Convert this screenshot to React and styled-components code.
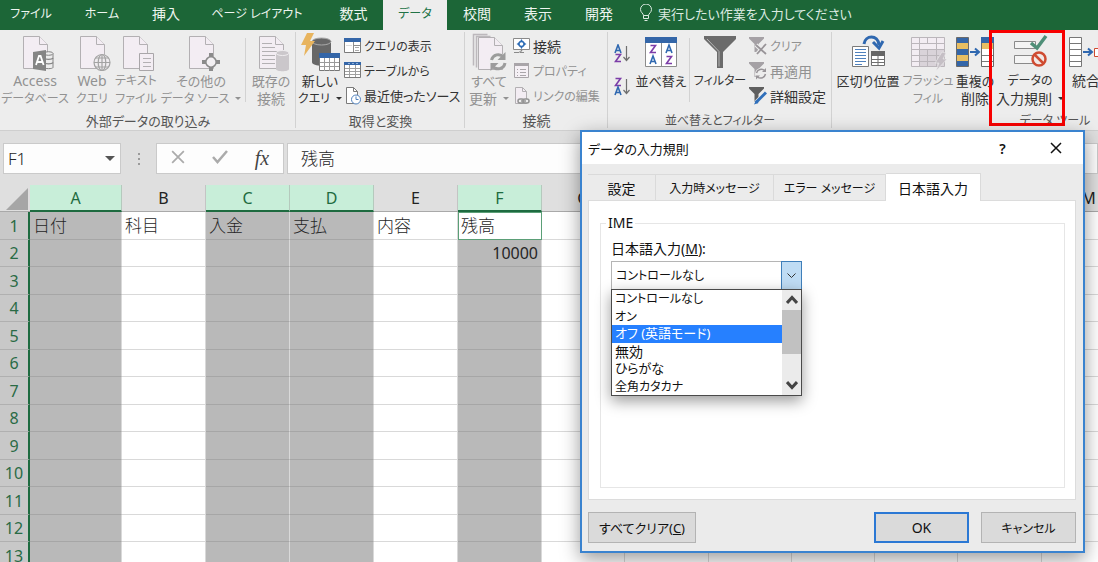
import styled, { createGlobalStyle, css } from "styled-components"

const GlobalStyle = createGlobalStyle`
  * {
    box-sizing: border-box;
  }

  body {
    margin: 0;
    overflow: hidden;
    font-family: "Noto Sans", "Noto Sans CJK JP", sans-serif;
    font-size: 14px;
    color: #262626;
    background: #fff;
  }

  button, input, select {
    font: inherit;
    color: inherit;
  }
`

const tabsData = [
  { name: "ファイル", width: 62 },
  { name: "ホーム", width: 80 },
  { name: "挿入", width: 48 },
  { name: "ページ レイアウト", width: 134 },
  { name: "数式", width: 59 },
  { name: "データ", width: 64, active: true },
  { name: "校閲", width: 60 },
  { name: "表示", width: 62 },
  { name: "開発", width: 60 },
]

// columns without a title lie behind the dialog
const columns = [
  { name: "A", title: "A", width: 92, selected: true },
  { name: "B", title: "B", width: 84 },
  { name: "C", title: "C", width: 84, selected: true },
  { name: "D", title: "D", width: 84, selected: true },
  { name: "E", title: "E", width: 84 },
  { name: "F", title: "F", width: 84, selected: true },
  { name: "G", title: "G", width: 83 },
  { name: "H", width: 84 },
  { name: "I", width: 83 },
  { name: "J", width: 83 },
  { name: "K", width: 83 },
  { name: "L", width: 84 },
  { name: "M", title: "M", width: 94 },
]

const cells = {
  A1: "日付",
  B1: "科目",
  C1: "入金",
  D1: "支払",
  E1: "内容",
  F1: "残高",
  F2: "10000",
}

const rows = [1, 2, 3, 4, 5, 6, 7, 8, 9, 10, 11, 12, 13]

const dialogTabs = [
  { name: "設定", width: 68 },
  { name: "入力時メッセージ", width: 118 },
  { name: "エラー メッセージ", width: 112 },
  { name: "日本語入力", width: 95, active: true },
]

const imeOptions = ["コントロールなし", "オン", "オフ (英語モード)", "無効", "ひらがな", "全角カタカナ"]

// katakana labels are set smaller than kanji ones
function textSize(text) {
  const katakana = (text.match(/[ァ-ヶー]/g) || []).length
  const hiragana = (text.match(/[ぁ-ん]/g) || []).length
  if (katakana + hiragana === 0) return 14
  if (text.includes("(")) return 13
  return katakana * 2 >= text.length ? 12 : 13
}

/* ---------- icons ---------- */

function Page({ x = 0, y = 0, fill = "#f3edf3", stroke = "#b3b0b3" }) {
  return (
    <g transform={`translate(${x} ${y})`} fill={fill} stroke={stroke}>
      <path d="M.5.5h16l8 8v24H.5z" />
      <path d="M16.5.5v8h8" />
    </g>
  )
}

function AccessIcon() {
  return (
    <svg width="38" height="38">
      <Page x={7} y={2} />
      <path d="M29 19.500v14c0 1.500 9 1.500 9 0v-14" fill="#ededed" stroke="#858585" transform="translate(-1 0)" />
      <ellipse cx="32.500" cy="19.500" rx="4.500" ry="1.800" fill="#ededed" stroke="#858585" />
      <path d="M28 24c1 1.800 8 1.800 9 0M28 28.500c1 1.800 8 1.800 9 0" fill="none" stroke="#858585" strokeWidth="1.400" />
      <path d="M17 18l13-2v21l-13-2z" fill="#858585" />
      <path d="M20 31l3-9h1.600l3 9M21.200 28h5" fill="none" stroke="#fff" strokeWidth="1.800" />
    </svg>
  )
}

function WebIcon() {
  return (
    <svg width="38" height="38">
      <Page x={7} y={2} />
      <g fill="#efecef" stroke="#a3a3a3" strokeWidth="1.200">
        <circle cx="29" cy="28.500" r="8" />
        <ellipse cx="29" cy="28.500" rx="3.800" ry="8" />
        <path d="M29 20.500v16M21 28.500h16M22.500 24h13M22.500 33h13" />
      </g>
    </svg>
  )
}

function TextFileIcon() {
  return (
    <svg width="38" height="38">
      <Page x={6} y={2} />
      <path d="M22.500 19.500h14v17h-14z" fill="#f3edf3" stroke="#a9a6a9" />
      <path d="M26 24.500h8M26 28.500h8M26 32.500h8" stroke="#b3b0b3" />
    </svg>
  )
}

function OtherSourceIcon() {
  return (
    <svg width="38" height="38">
      <Page x={7} y={2} />
      <circle cx="29" cy="28" r="5.200" fill="#f3f0f3" stroke="#8b8b8b" strokeWidth="1.600" />
      <path d="M27 19h4v4h-4zM27 33h4v4h-4zM20 26h4v4h-4zM34 26h4v4h-4z" fill="#8b8b8b" />
    </svg>
  )
}

function ExistingIcon() {
  return (
    <svg width="38" height="38">
      <Page x={7} y={2} />
      <path d="M10 9.500h10M10 13.500h13M10 17.500h18M10 21.500h13M10 25.500h13M10 29.500h13" stroke="#b3b0b3" />
      <path d="M24 19v16c0 3 13 3 13 0V19z" fill="#cbc7cb" />
      <ellipse cx="30.500" cy="19" rx="6.500" ry="2.500" fill="#cbc7cb" stroke="#efecef" />
    </svg>
  )
}

function NewQueryIcon() {
  return (
    <svg width="40" height="38">
      <path d="M12 7v21c0 5 19 5 19 0V7z" fill="#676767" />
      <ellipse cx="21.500" cy="7.500" rx="9.500" ry="3.500" fill="#676767" stroke="#aaa" />
      <path d="M7-1h7l-4 8h5L4 22l2-11H1z" fill="#e8b45e" />
      <path d="M19.500 19.500h20v17h-20z" fill="#fff" stroke="#777" />
      <path d="M19 19h21v5H19z" fill="#3466a8" />
      <path d="M20 28.500h19M20 32.500h19M24.500 24v13M29.500 24v13M34.500 24v13" stroke="#9a9a9a" />
    </svg>
  )
}

function RefreshAllIcon() {
  return (
    <svg width="34" height="38">
      <path d="M1.500 31.500V.5h14M4.500 33.500v-31h14" fill="none" stroke="#bcb8bc" strokeWidth="1.500" />
      <Page x={6} y={3} />
      <circle cx="26" cy="27.500" r="8.500" fill="#eee" />
      <path d="M19.500 26a7 7 0 0 1 12-3M33 29a7 7 0 0 1-12.500 3" fill="none" stroke="#9c9c9c" strokeWidth="3" />
      <path d="M33.500 18v8h-8zM18.500 37v-8h8z" fill="#9c9c9c" />
    </svg>
  )
}

function QueryListIcon() {
  return (
    <svg width="17" height="17">
      <path d="M.5 1.500h16v14H.5z" fill="#fff" stroke="#7b7b7b" />
      <path d="M0 1h17v4H0z" fill="#3466a8" />
      <path d="M9.500 5v10M10 8.500h6" stroke="#8e8e8e" />
      <path d="M11 10.500h4M11 13.500h4" stroke="#aaa" />
      <path d="M2 8.500h6" stroke="#ddd" />
    </svg>
  )
}

function TableIcon() {
  return (
    <svg width="17" height="17">
      <path d="M.5 1.500h16v14H.5z" fill="#fff" stroke="#7b7b7b" />
      <path d="M0 0h17v3H0z" fill="#3466a8" />
      <path d="M4 1.500h2M8 1.500h2M12 1.500h2" stroke="#8fb0db" />
      <path d="M1 6.500h15M1 9.500h15M1 12.500h15M5.500 3v12M11.500 3v12" stroke="#a0a0a0" />
    </svg>
  )
}

function RecentIcon() {
  return (
    <svg width="17" height="19">
      <path d="M2.500 1.500h7l4 4v12h-11z" fill="#fff" stroke="#7b7b7b" />
      <path d="M9.500 1.500v4h4" fill="none" stroke="#7b7b7b" />
      <circle cx="12" cy="13.500" r="4.500" fill="#fff" stroke="#4f81bd" />
      <path d="M12 10.500v3h2.500" fill="none" stroke="#4f81bd" />
    </svg>
  )
}

function ConnectionIcon() {
  return (
    <svg width="17" height="17">
      <path d="M.5 1.500h16v11H.5z" fill="#fff" stroke="#8a8a8a" />
      <path d="M1 15.500h5l2-2h1l-2 2h4" fill="none" stroke="#8a8a8a" />
      <path d="M8.500 2l1.500 2.500h-3zM8.500 12L7 9.500h3zM3.500 7L6 5.500v3zM13.500 7L11 8.500v-3z" fill="#2d6cb5" />
      <circle cx="8.500" cy="7" r="2.500" fill="#fff" stroke="#2d6cb5" strokeWidth="1.400" />
    </svg>
  )
}

function PropertyIcon() {
  return (
    <svg width="17" height="17">
      <path d="M1.500 1.500h14v14h-14z" fill="#f5f0f5" stroke="#a9a5a9" />
      <path d="M1 1h15v3H1z" fill="#a9a5a9" />
      <path d="M4 7.500h1M7 7.500h6M4 10.500h1M7 10.500h6M4 13.500h1M7 13.500h6" stroke="#a9a5a9" />
    </svg>
  )
}

function LinkEditIcon() {
  return (
    <svg width="17" height="19">
      <path d="M2.500 1.500h7l4 4v12h-11z" fill="#f3edf3" stroke="#b3b0b3" />
      <path d="M9.500 1.500v4h4" fill="none" stroke="#b3b0b3" />
      <g fill="#eee" stroke="#939393" strokeWidth="1.500">
        <rect x="5" y="13" width="6" height="4" rx="2" />
        <rect x="10" y="13" width="6" height="4" rx="2" />
      </g>
      <path d="M8 15h5" stroke="#939393" strokeWidth="1.500" />
    </svg>
  )
}

const letterPaths = {
  A: "M0 8L3 0l3 8M1 5.500h4",
  Z: "M.5.500h5L.5 7.500h5.500",
}

// small "A" and "Z" strokes used by the sort icons
function Letter({ char, x, y }) {
  return (
    <path
      d={letterPaths[char]}
      transform={`translate(${x} ${y})`}
      fill="none"
      stroke={char === "A" ? "#2f68b0" : "#7c3da8"}
      strokeWidth="1.600"
    />
  )
}

function SortIcon({ first, second }) {
  return (
    <svg width="16" height="20">
      <Letter char={first} x={1} y={1} />
      <Letter char={second} x={1} y={10} />
      <path d="M12.500 2v14M9.500 13l3 3.500 3-3.500" fill="none" stroke="#6f6f6f" strokeWidth="1.200" />
    </svg>
  )
}

function SortDialogIcon() {
  return (
    <svg width="34" height="38">
      <path d="M1.500 3.500h31v29h-31zM17.500 8v24" fill="#fff" stroke="#8c8c8c" />
      <path d="M1 3h32v6H1z" fill="#3466a8" />
      <Letter char="Z" x={6} y={11} />
      <Letter char="A" x={6} y={22} />
      <Letter char="A" x={22} y={11} />
      <Letter char="Z" x={22} y={22} />
    </svg>
  )
}

function FilterIcon() {
  return (
    <svg width="34" height="38">
      <path d="M1 2h32v3L20 18v16h-6V18L1 5z" fill="#6b6b6b" />
      <path d="M4 5l12 12.500v15" fill="none" stroke="#b5b5b5" />
    </svg>
  )
}

function SmallFunnel({ color }) {
  return <path d="M0 1h15v1.500L9.500 8v8h-4V8L0 2.500z" fill={color} />
}

function ClearIcon() {
  return (
    <svg width="18" height="19">
      <SmallFunnel color="#a5a1a5" />
      <path d="M7 9l10 9M17 8L8 18" stroke="#ededed" strokeWidth="4" />
      <path d="M7 9l10 9M17 8L8 18" stroke="#989498" strokeWidth="1.800" />
    </svg>
  )
}

function ReapplyIcon() {
  return (
    <svg width="18" height="19">
      <SmallFunnel color="#a5a1a5" />
      <circle cx="12" cy="13" r="6" fill="#ededed" />
      <path d="M7.500 12a5 5 0 0 1 8-2.500M16.500 13a5 5 0 0 1-8 3" fill="none" stroke="#989498" strokeWidth="1.500" />
      <path d="M17 7v4h-4zM7 18.500v-4h4z" fill="#989498" />
    </svg>
  )
}

function AdvancedIcon() {
  return (
    <svg width="18" height="19">
      <SmallFunnel color="#5f5f5f" />
      <path d="M17 7L7 17" stroke="#ededed" strokeWidth="5" />
      <path d="M17 6.500L7 16.500" stroke="#2f6fba" strokeWidth="3" />
      <path d="M7 14l-2 4.500L9.500 17z" fill="#2f6fba" />
    </svg>
  )
}

function SplitIcon() {
  return (
    <svg width="36" height="38">
      <path d="M2.500 12.500h16v20h-16z" fill="#fff" stroke="#7a7a7a" />
      <path d="M5 15.500h11M5 18.500h11M5 21.500h11M5 24.500h11M5 27.500h11M5 30.500h7" stroke="#4f81bd" />
      <path d="M21.500 18.500h13v13h-13zM28 22v10M22 25.500h13M22 28.500h13" fill="#fff" stroke="#6f6f6f" />
      <path d="M21 17h14v5H21z" fill="#666" />
      <path d="M14 10c1-9 14-10 15 1" fill="none" stroke="#2f68b0" strokeWidth="3" />
      <path d="M23 8l6 6 4-7" fill="none" stroke="#2f68b0" strokeWidth="3" />
    </svg>
  )
}

function FlashFillIcon() {
  return (
    <svg width="38" height="38">
      <path d="M2.500 3.500h33v29h-33z" fill="#f3edf3" stroke="#bbb6bb" />
      <path d="M10 15h25v17H10z" fill="#d9d3d9" />
      <path d="M3 9.500h32M3 15.500h32M3 21.500h32M3 27.500h32M10.500 4v29M18.500 4v29M27.500 4v29" stroke="#bbb6bb" />
      <path d="M11 10h16v5H11z" fill="#f3edf3" />
      <path d="M33 18l4 1-3 6h4L27 37l3-8h-4z" fill="#c5bfc5" stroke="#eee" strokeWidth=".6" />
    </svg>
  )
}

function DuplicateIcon() {
  return (
    <svg width="38" height="38">
      <path d="M.5 3.500h12v29H.5z" fill="#3466a8" stroke="#6a6a6a" />
      <path d="M1 9h11v6H1zM1 21h11v6H1z" fill="#e8be62" />
      <path d="M25.500 3.500h12v29h-12z" fill="#fff" stroke="#6a6a6a" />
      <path d="M25 3h13v6H25z" fill="#3466a8" />
      <path d="M26 9h11v6H26z" fill="#e8be62" />
      <path d="M26 21.500h11M26 27.500h11" stroke="#7a7a7a" />
      <path d="M14 18h8M19 14.500l4 3.500-4 3.500" fill="none" stroke="#2f68b0" strokeWidth="2" />
    </svg>
  )
}

function ValidationIcon() {
  return (
    <svg width="38" height="38">
      <path d="M3.500 7.500h21v7h-21zM3.500 21.500h21v8h-21z" fill="#f4f4f4" stroke="#8a8a8a" />
      <path d="M20 9l6 5L35 2" fill="none" stroke="#4f8f78" strokeWidth="3.500" />
      <circle cx="28" cy="25" r="6.500" fill="#f1e8e5" stroke="#cf4b31" strokeWidth="2.500" />
      <path d="M23.500 20.500l9 9" stroke="#cf4b31" strokeWidth="2.500" />
    </svg>
  )
}

function MergeIcon() {
  return (
    <svg width="38" height="38">
      <path d="M2.500 3.500h12v29h-12z" fill="#fff" stroke="#777" />
      <path d="M3 9.500h11M3 15.500h11M3 21.500h11M3 27.500h11" stroke="#777" />
      <path d="M16 18h8M21 14.500l4 3.500-4 3.500" fill="none" stroke="#2f68b0" strokeWidth="2" />
      <path d="M27.500 14.500h10v8h-10z" fill="#fff" stroke="#cf4b31" />
    </svg>
  )
}

function BulbIcon() {
  return (
    <svg width="12" height="18" fill="none" stroke="#dcebe2">
      <path d="M3.500 11.500c0-2-3-3-3-6a5 5 0 0 1 11 0c0 3-3 4-3 6zM3.500 11.500v3h5v-3M4.500 16.500h3" />
    </svg>
  )
}

function CrossIcon({ color, size }) {
  return (
    <svg width={size} height={size} viewBox="0 0 12 12">
      <path d="M1 1l10 10M11 1L1 11" stroke={color} strokeWidth="1.500" />
    </svg>
  )
}

/* ---------- ribbon ---------- */

function BigButton({ icon, lines, width, off, arrow, children }) {
  return (
    <BigBtn type="button" $width={width} $off={off}>
      {icon}
      {lines.map((line, i) => (
        <BigLine key={line} $size={textSize(line)}>
          {line}
          {arrow && i === lines.length - 1 && <Arrow />}
        </BigLine>
      ))}
      {children}
    </BigBtn>
  )
}

function SmallButton({ icon, text, off }) {
  return (
    <SmallBtn type="button" $off={off} $size={textSize(text)}>
      {icon}
      <span>{text}</span>
    </SmallBtn>
  )
}

function Group({ name, width, children }) {
  return (
    <GroupBox $width={width}>
      <GroupTools>{children}</GroupTools>
      <GroupName $size={textSize(name)}>{name}</GroupName>
    </GroupBox>
  )
}

function Ribbon() {
  return (
    <RibbonBar>
      <Group name="外部データの取り込み" width={296}>
        <BigButton icon={<AccessIcon />} lines={["Access", "データベース"]} width={70} off />
        <BigButton icon={<WebIcon />} lines={["Web", "クエリ"]} width={44} off />
        <BigButton icon={<TextFileIcon />} lines={["テキスト", "ファイル"]} width={44} off />
        <BigButton icon={<OtherSourceIcon />} lines={["その他の", "データ ソース"]} width={86} off arrow />
        <Divider />
        <BigButton icon={<ExistingIcon />} lines={["既存の", "接続"]} width={48} off />
      </Group>
      <Group name="取得と変換" width={169}>
        <BigButton icon={<NewQueryIcon />} lines={["新しい", "クエリ"]} width={48} arrow />
        <SmallList>
          <SmallButton icon={<QueryListIcon />} text="クエリの表示" />
          <SmallButton icon={<TableIcon />} text="テーブルから" />
          <SmallButton icon={<RecentIcon />} text="最近使ったソース" />
        </SmallList>
      </Group>
      <Group name="接続" width={143}>
        <BigButton icon={<RefreshAllIcon />} lines={["すべて", "更新"]} width={48} off arrow />
        <SmallList>
          <SmallButton icon={<ConnectionIcon />} text="接続" />
          <SmallButton icon={<PropertyIcon />} text="プロパティ" off />
          <SmallButton icon={<LinkEditIcon />} text="リンクの編集" off />
        </SmallList>
      </Group>
      <Group name="並べ替えとフィルター" width={224}>
        <SortList>
          <SortBtn type="button" aria-label="昇順"><SortIcon first="A" second="Z" /></SortBtn>
          <SortBtn type="button" aria-label="降順"><SortIcon first="Z" second="A" /></SortBtn>
        </SortList>
        <BigButton icon={<SortDialogIcon />} lines={["並べ替え"]} width={54} />
        <Divider />
        <BigButton icon={<FilterIcon />} lines={["フィルター"]} width={58} />
        <SmallList>
          <SmallButton icon={<ClearIcon />} text="クリア" off />
          <SmallButton icon={<ReapplyIcon />} text="再適用" off />
          <SmallButton icon={<AdvancedIcon />} text="詳細設定" />
        </SmallList>
      </Group>
      <Group name="データ ツール" width={446}>
        <BigButton icon={<SplitIcon />} lines={["区切り位置"]} width={72} />
        <BigButton icon={<FlashFillIcon />} lines={["フラッシュ", "フィル"]} width={48} off />
        <BigButton icon={<DuplicateIcon />} lines={["重複の", "削除"]} width={46} />
        <BigButton icon={<ValidationIcon />} lines={["データの", "入力規則"]} width={64} arrow>
          <Marker />
        </BigButton>
        <BigButton icon={<MergeIcon />} lines={["統合"]} width={48} />
      </Group>
    </RibbonBar>
  )
}

/* ---------- sheet ---------- */

function FormulaBar() {
  return (
    <FormulaRow>
      <NameBox>
        <input aria-label="名前ボックス" defaultValue="F1" />
        <Arrow $big />
      </NameBox>
      <Dots><i /><i /><i /></Dots>
      <FxBox>
        <button type="button" aria-label="キャンセル"><CrossIcon color="#ababab" size={14} /></button>
        <button type="button" aria-label="入力">
          <svg width="16" height="14"><path d="M1 7l4.500 5L15 1" fill="none" stroke="#ababab" strokeWidth="2.500" /></svg>
        </button>
        <Fx type="button">fx</Fx>
      </FxBox>
      <FormulaInput aria-label="数式バー" defaultValue="残高" />
    </FormulaRow>
  )
}

function Sheet() {
  return (
    <Grid>
      <colgroup>
        <Col $width={30} />
        {columns.map((col) => <Col key={col.name} $width={col.width} />)}
      </colgroup>
      <thead>
        <tr>
          <Corner>
            <svg width="22" height="22"><path d="M22 0v22H0z" fill="#a6a6a6" /></svg>
          </Corner>
          {columns.map((col) => (
            <ColHead key={col.name} $selected={col.selected}>{col.title}</ColHead>
          ))}
        </tr>
      </thead>
      <tbody>
        {rows.map((row) => (
          <Row key={row}>
            <RowHead>{row}</RowHead>
            {columns.map((col) => {
              const id = col.name + row
              return (
                <Cell key={id} $selected={col.selected} $current={id === "F1"} $number={row > 1}>
                  {cells[id]}
                </Cell>
              )
            })}
          </Row>
        ))}
      </tbody>
    </Grid>
  )
}

/* ---------- dialog ---------- */

function ValidationDialog() {
  return (
    <Dialog role="dialog" aria-labelledby="dialog-title">
      <TitleBar>
        <DialogTitle id="dialog-title">データの入力規則</DialogTitle>
        <TitleButton type="button">?</TitleButton>
        <TitleButton type="button" aria-label="閉じる"><CrossIcon color="#111" size={12} /></TitleButton>
      </TitleBar>
      <DialogBody>
        <DialogTabs role="tablist">
          {dialogTabs.map((tab) => (
            <DialogTab
              key={tab.name}
              type="button"
              role="tab"
              aria-selected={!!tab.active}
              $active={tab.active}
              $width={tab.width}
              $size={textSize(tab.name)}
            >
              {tab.name}
            </DialogTab>
          ))}
        </DialogTabs>
        <Panel>
          <Fieldset>
            <legend>IME</legend>
            <label htmlFor="ime">日本語入力(<u>M</u>):</label>
            <SelectWrap>
              <Select id="ime" defaultValue={imeOptions[0]}>
                {imeOptions.map((option) => <option key={option}>{option}</option>)}
              </Select>
              <SelectArrow>
                <svg width="9" height="6"><path d="M.5.5l4 4 4-4" fill="none" stroke="#333" /></svg>
              </SelectArrow>
              <Popup>
                <Options role="listbox" aria-label="日本語入力">
                  {imeOptions.map((option, i) => (
                    <Option key={option} role="option" aria-selected={i === 2} $selected={i === 2} $size={textSize(option)}>
                      {option}
                    </Option>
                  ))}
                </Options>
                <Scrollbar>
                  <svg width="12" height="10"><path d="M1 8l5-5.500L11 8" fill="none" stroke="#444" strokeWidth="3" /></svg>
                  <Thumb />
                  <svg width="12" height="10"><path d="M1 2l5 5.500L11 2" fill="none" stroke="#444" strokeWidth="3" /></svg>
                </Scrollbar>
              </Popup>
            </SelectWrap>
          </Fieldset>
        </Panel>
        <DialogFooter>
          <DialogButton type="button" $width={108} $size={13}>すべてクリア(<u>C</u>)</DialogButton>
          <Spacer />
          <DialogButton type="button" $width={95} $size={14} $primary>OK</DialogButton>
          <DialogButton type="button" $width={95} $size={12}>キャンセル</DialogButton>
        </DialogFooter>
      </DialogBody>
    </Dialog>
  )
}

function App() {
  return (
    <Window>
      <GlobalStyle />
      <TabBar>
        {tabsData.map((tab) => (
          <Tab key={tab.name} type="button" $active={tab.active} $width={tab.width} $size={textSize(tab.name)}>
            {tab.name}
          </Tab>
        ))}
        <TellMe type="button">
          <BulbIcon />
          実行したい作業を入力してください
        </TellMe>
      </TabBar>
      <Ribbon />
      <FormulaBar />
      <Sheet />
      <ValidationDialog />
    </Window>
  )
}

export default App

const proportional = css`
  font-feature-settings: "palt";
  white-space: nowrap;
`

const Window = styled.div`
  position: relative;
  height: 100vh;
  overflow: hidden;
  background: #dfdfdf;
`
const TabBar = styled.nav`
  display: flex;
  height: 30px;
  background: #1c6637;
`
const Tab = styled.button`
  ${proportional}
  flex: none;
  width: ${(props) => props.$width}px;
  padding: 0 0 5px;
  border: 0;
  font-size: ${(props) => props.$size}px;
  color: ${(props) => (props.$active ? "#217346" : "#eef5f0")};
  background: ${(props) => (props.$active ? "#ededed" : "transparent")};
`
const TellMe = styled.button`
  ${proportional}
  display: flex;
  align-items: center;
  gap: 6px;
  padding: 0 0 4px;
  margin-left: 11px;
  border: 0;
  color: #dcebe2;
  background: transparent;
  font-size: 13px;
`
const RibbonBar = styled.div`
  ${proportional}
  display: flex;
  height: 101px;
  overflow: hidden;
  background: #ededed;
  border-bottom: 1px solid #cfcfcf;
`
const GroupBox = styled.section`
  flex: none;
  width: ${(props) => props.$width}px;
  background: linear-gradient(#d2d2d2, #d2d2d2) right 2px / 1px 96px no-repeat;
`
const GroupTools = styled.div`
  display: flex;
  height: 82px;
`
const GroupName = styled.div`
  line-height: 18px;
  text-align: center;
  font-size: ${(props) => props.$size}px;
  color: #555;
`
const Divider = styled.div`
  flex: none;
  width: 1px;
  height: 64px;
  margin: 8px 1px 0;
  background: #d2d2d2;
`
const BigBtn = styled.button`
  position: relative;
  display: flex;
  flex: none;
  flex-direction: column;
  align-items: center;
  width: ${(props) => props.$width}px;
  padding: 4px 0 0;
  border: 0;
  background: none;
  white-space: nowrap;
  color: ${(props) => (props.$off ? "#929292" : "#333")};

  svg {
    flex: none;
    margin-bottom: -1px;
    overflow: visible;
  }
`
const BigLine = styled.span`
  display: flex;
  align-items: center;
  height: 18px;
  font-size: ${(props) => props.$size}px;
`
const Arrow = styled.i`
  width: 0;
  margin-left: 6px;
  border: solid transparent;
  border-width: ${(props) => (props.$big ? "5px 5px 0" : "3px 3px 0")};
  border-top-color: ${(props) => (props.$big ? "#555" : "currentColor")};
`
const Marker = styled.span`
  position: absolute;
  top: 0;
  left: -9px;
  width: 76px;
  height: 96px;
  border: 3px solid #f80000;
`
const SmallList = styled.div`
  display: flex;
  flex-direction: column;
  padding-top: 3px;
`
const SmallBtn = styled.button`
  display: flex;
  align-items: center;
  gap: 3px;
  height: 25px;
  padding: 0;
  border: 0;
  background: none;
  font-size: ${(props) => props.$size}px;
  color: ${(props) => (props.$off ? "#929292" : "#333")};
`
const SortList = styled.div`
  display: flex;
  flex-direction: column;
  gap: 13px;
  padding: 14px 4px 0 6px;
`
const SortBtn = styled.button`
  height: 20px;
  padding: 0;
  border: 0;
  background: none;
  line-height: 0;
`
const FormulaRow = styled.div`
  display: flex;
  height: 54px;
  padding: 12px 0 11px 3px;
`
const NameBox = styled.div`
  display: flex;
  align-items: center;
  width: 118px;
  padding-right: 5px;
  border: 1px solid #cacaca;
  background: #fdfdfd;

  input {
    flex: 1;
    min-width: 0;
    padding: 0 4px;
    border: 0;
    background: none;
    font-size: 17px;
    font-weight: 300;
  }
`
const Dots = styled.div`
  display: flex;
  flex-direction: column;
  align-items: center;
  justify-content: center;
  gap: 3px;
  width: 35px;

  i {
    width: 2px;
    height: 2px;
    background: #9a9a9a;
  }
`
const FxBox = styled.div`
  display: flex;
  width: 128px;
  border: 1px solid #cacaca;
  background: #fdfdfd;

  button {
    flex: 1;
    padding: 0;
    border: 0;
    background: none;
  }
`
const Fx = styled.button`
  && {
    font: italic 20px "Liberation Serif", serif;
    color: #444;
  }
`
const FormulaInput = styled.input`
  flex: 1;
  min-width: 0;
  margin-left: 3px;
  padding: 0 13px 2px;
  border: 1px solid #cacaca;
  background: #fdfdfd;
  font-size: 17px;
  font-weight: 300;
`
const Grid = styled.table`
  width: 1062px;
  table-layout: fixed;
  border-collapse: separate;
  border-spacing: 0;
  background: #fff;
  font-size: 16px;
`
const Col = styled.col`
  width: ${(props) => props.$width}px;
`
const Corner = styled.th`
  height: 27px;
  padding: 0 2px 1px 0;
  text-align: right;
  vertical-align: bottom;
  line-height: 0;
  background: #dfdfdf;
  border-bottom: 1px solid #a9a9a9;
`
const ColHead = styled.th`
  height: 27px;
  padding: 0;
  line-height: 24px;
  font-weight: 400;
  color: ${(props) => (props.$selected ? "#1e6b40" : "#222")};
  background: ${(props) => (props.$selected ? "#c8eed9" : "#dfdfdf")};
  border-right: 1px solid ${(props) => (props.$selected ? "#b5c9bd" : "#c4c4c4")};
  border-bottom: ${(props) => (props.$selected ? "2px solid #1e6b40" : "1px solid #a9a9a9")};
`
const Row = styled.tr`
  height: 28px;

  &:nth-child(even) {
    height: 27px;
  }
`
const RowHead = styled.th`
  padding: 0;
  line-height: 24px;
  font-weight: 400;
  color: #2a6b45;
  background: #c8c8c8;
  border-right: 2px solid #1e6b40;
  border-bottom: 1px solid #b0b0b0;
`
const Cell = styled.td`
  padding: 0 3px;
  line-height: 24px;
  font-size: 17px;
  font-weight: 300;
  white-space: nowrap;
  text-align: ${(props) => (props.$number ? "right" : "left")};
  background: ${(props) => (props.$selected ? "#b9b9b9" : "#fff")};
  border-right: 1px solid #d9d9d9;
  border-bottom: 1px solid ${(props) => (props.$selected ? "#a6a6a6" : "#d9d9d9")};

  ${(props) => props.$number && css`
    font-size: 16px;
    font-weight: 400;
  `}

  ${(props) => props.$current && css`
    padding: 0 2px;
    background: #fff;
    border: 1px solid #5b9f77;
  `}
`
const Dialog = styled.div`
  ${proportional}
  position: absolute;
  top: 130px;
  left: 580px;
  width: 505px;
  border: 2px solid #3a83cf;
  background: #ebebeb;
  box-shadow: 0 6px 18px rgba(0, 0, 0, 0.4);
  font-size: 13px;
  color: #111;
`
const TitleBar = styled.div`
  display: flex;
  align-items: center;
  height: 32px;
  padding: 0 1px 0 6px;
  background: #fff;
`
const DialogTitle = styled.h2`
  flex: 1;
  margin: 0;
  font-size: 13px;
  font-weight: 400;
`
const TitleButton = styled.button`
  width: 53px;
  padding: 0;
  border: 0;
  background: none;
  font-size: 14px;
  font-weight: 600;
`
const DialogBody = styled.div`
  padding: 9px 7px 8px 6px;
`
const DialogTabs = styled.div`
  display: flex;
  align-items: flex-end;
  height: 27px;
`
const DialogTab = styled.button`
  flex: none;
  width: ${(props) => props.$width}px;
  height: 26px;
  padding: 0;
  border: solid #dadada;
  border-width: 1px 1px 0 0;
  background: #ebebeb;
  font-size: ${(props) => props.$size}px;

  ${(props) => props.$active && css`
    position: relative;
    height: 28px;
    margin-bottom: -1px;
    background: #fff;
  `}
`
const Panel = styled.div`
  height: 300px;
  padding: 13px 10px 11px 11px;
  border: 1px solid #dcdcdc;
  background: #fff;
`
const Fieldset = styled.fieldset`
  height: 274px;
  margin: 0;
  padding: 5px 10px;
  border: 1px solid #e6e6e6;

  legend {
    margin-left: -5px;
    padding: 0 2px;
    line-height: 18px;
    font-size: 14px;
  }

  label {
    display: block;
    line-height: 24px;
    font-size: 14px;
  }
`
const SelectWrap = styled.div`
  position: relative;
  width: 191px;
`
const Select = styled.select`
  display: block;
  width: 100%;
  height: 29px;
  padding: 0 4px;
  appearance: none;
  border: 1px solid #b5b5b5;
  border-radius: 0;
  background: #fff;
  font-size: 12px;
`
const SelectArrow = styled.span`
  position: absolute;
  top: 0;
  right: 0;
  display: flex;
  align-items: center;
  justify-content: center;
  width: 21px;
  height: 29px;
  border: 1px solid #3f7fba;
  background: #bfdcf4;
  pointer-events: none;
`
const Popup = styled.div`
  position: absolute;
  top: 28px;
  left: 0;
  display: flex;
  width: 191px;
  border: 1px solid #4a4a4a;
  background: #fff;
  box-shadow: 0 5px 14px rgba(0, 0, 0, 0.4);
`
const Options = styled.ul`
  flex: 1;
  margin: 0;
  padding: 0;
  list-style: none;
`
const Option = styled.li`
  height: 17px;
  padding: 0 3px;
  line-height: 17px;
  font-size: ${(props) => props.$size}px;
  color: ${(props) => (props.$selected ? "#fff" : "#111")};
  background: ${(props) => (props.$selected ? "#2680ff" : "transparent")};

  &:nth-child(odd) {
    height: 18px;
  }
`
const Scrollbar = styled.div`
  display: flex;
  flex-direction: column;
  align-items: center;
  width: 19px;
  padding: 5px 0;
  background: #ebebeb;
`
const Thumb = styled.div`
  width: 100%;
  height: 44px;
  margin: 5px 0 auto;
  background: #c1c1c1;
`
const DialogFooter = styled.div`
  display: flex;
  gap: 12px;
  padding-top: 12px;
`
const Spacer = styled.div`
  flex: 1;
`
const DialogButton = styled.button`
  width: ${(props) => props.$width}px;
  height: 31px;
  padding: 0;
  border: ${(props) => (props.$primary ? "2px solid #2b78d4" : "1px solid #b3b3b3")};
  background: #dadada;
  font-size: ${(props) => props.$size}px;
`
